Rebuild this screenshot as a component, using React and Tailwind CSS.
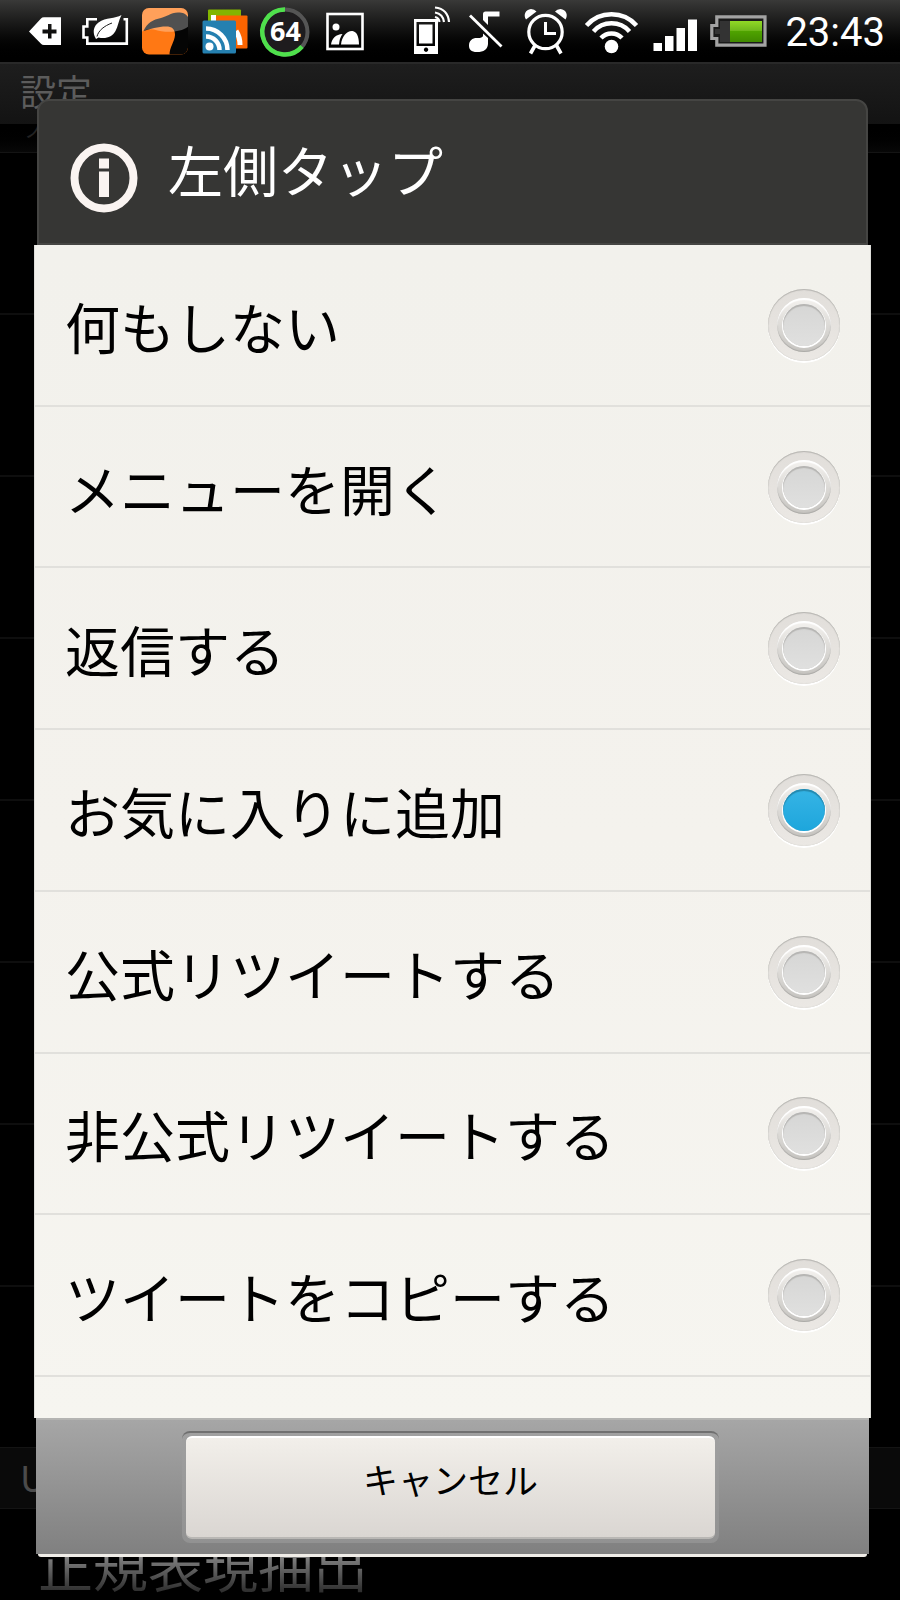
import { useState } from 'react';

const OPTIONS = [
  '何もしない',
  'メニューを開く',
  '返信する',
  'お気に入りに追加',
  '公式リツイートする',
  '非公式リツイートする',
  'ツイートをコピーする',
];

function LeftIcons() {
  return (
    <div className="flex items-center gap-3">
      <svg width="48" height="62" viewBox="22 0 48 62">
        <path fill="#fff" fillRule="evenodd" d="M29 31.5 41 18.5Q42 17.3 44 17.3H61V45H44Q42 45 41 43.8ZM48 24V29.5H42.5V33.5H48V38.5H51.5V33.5H56.5V29.5H51.5V24Z" />
      </svg>
      <svg width="48" height="62" viewBox="82 0 48 62">
        <path fill="none" stroke="#fff" strokeWidth="2.6" d="M97 19.3H87.3V26.5H83.5V37.5H87.3V43.6H126.8V19.3H123.5" />
        <path fill="#fff" d="M121.5 15C115 19 106 17 98.500 22.500C93.500 26.500 93 31 94.500 36L96 39L98.500 37.500C106 39.500 112.500 36.500 115.500 31C118 26.500 118.500 20.500 121.500 15Z" />
        <path fill="none" stroke="#1c1c1c" strokeWidth="1" d="M97 36.500C98.500 30.500 104 26 112 23" />
      </svg>
      <svg width="48" height="62" viewBox="142 0 48 62">
        <defs>
          <clipPath id="app-clip">
            <rect x="142" y="8" width="46" height="46.500" rx="7" />
          </clipPath>
        </defs>
        <g clipPath="url(#app-clip)">
          <rect x="142" y="8" width="46" height="47" fill="#ff7814" />
          <path fill="#050505" d="M143.500 31C147 23 153 19.500 161 18C167 16.500 170 13 178 12.500C184 12.500 187 14.500 189 19V55H169.500C169.500 47 174.500 42 175 35C175 29 172 26.500 166 26.500C158 26.500 150 29 143.500 31Z" />
          <path fill="#fff" fillOpacity="0.3" d="M142 8H189V26C181 33 165 33 154 29.500Q148 28.500 142 31.500Z" />
        </g>
      </svg>
      <svg width="48" height="62" viewBox="202 0 48 62">
        <rect x="208" y="9.500" width="33" height="32" rx="1" fill="#83b500" />
        <rect x="214.500" y="15.500" width="33" height="33" rx="1" fill="#fb6400" />
        <path stroke="#fff" strokeWidth="5" fill="none" d="M213.500 15V22M236 31Q240 37 240 45" />
        <rect x="202.500" y="20.500" width="33.500" height="33" rx="1.500" fill="#2580b0" />
        <circle cx="209.500" cy="46.500" r="4" fill="#fff" />
        <path fill="none" stroke="#fff" strokeWidth="4.500" d="M206 36.500A13.500 13.500 0 0 1 219.500 50M206 28.500A21.500 21.500 0 0 1 227.500 50" />
      </svg>
      <svg width="48" height="62" viewBox="262 0 48 62" className="overflow-visible">
        <circle cx="285" cy="32" r="22.500" fill="#1e1c1e" stroke="#555" strokeWidth="4" />
        <path fill="none" stroke="#4fe04c" strokeWidth="4.500" d="M285 9.500A22.500 22.500 0 1 0 302 46.500" />
        <text x="285.500" y="41" textAnchor="middle" fill="#fff" fontSize="27" fontWeight="700" fontFamily="'Open Sans', sans-serif">64</text>
      </svg>
      <svg width="48" height="62" viewBox="322 0 48 62">
        <rect x="327.500" y="14" width="35" height="35" fill="none" stroke="#fff" strokeWidth="2.600" />
        <circle cx="336" cy="27" r="3.500" fill="#fff" />
        <path fill="#fff" d="M331 44.500C332 38 336 34.500 342.500 34Q339.500 38 339 44.500ZM341 44.500C342 36 347 30.500 352.500 31C356.500 31.500 359 36 359 44.500Z" />
      </svg>
    </div>
  );
}

function RightIcons() {
  return (
    <>
      <svg width="48" height="62" viewBox="408 0 48 62">
        <path fill="#fff" fillRule="evenodd" d="M414 19H438V54H414ZM416.500 22V46H435V22ZM426 47.500A2.200 2.200 0 1 0 426.100 47.500Z" />
        <rect x="419" y="24.500" width="13.500" height="19" fill="#fff" />
        <path fill="none" stroke="#fff" strokeWidth="2.200" d="M435 17Q439 18 439.500 22M435 12.500Q443 14 444 22M435 7.500Q448 9 449 22" />
      </svg>
      <svg width="42" height="62" viewBox="468 0 42 62">
        <path fill="#fff" d="M483 14Q483 11.500 485.500 11.500H499.500V16.500H488V25L483 20ZM483 33.500 488 38V44C487.500 49.500 484 52 477 52C471 52 469 49.500 469 45.500C469 40 473 37.500 478 38Q482 38 483 36Z" />
        <path stroke="#fff" strokeWidth="2.800" d="M470 15.500 501.500 46.500" />
      </svg>
      <svg width="48" height="62" viewBox="522 0 48 62">
        <circle cx="545.500" cy="32" r="16.700" fill="none" stroke="#fff" strokeWidth="3.200" />
        <path fill="none" stroke="#fff" strokeWidth="3" d="M545.500 22V33.500H556" />
        <path fill="none" stroke="#fff" strokeWidth="3.600" d="M535 45.500 530.500 53.500M556.500 45.500 561 53.500" />
        <path fill="#fff" d="M526 19.500C523 15 525.500 9.500 531 9Q534.500 9 536.500 11.500ZM565.500 19.500C568.500 15 566 9.500 560.500 9Q557 9 555 11.500Z" />
      </svg>
      <svg width="58" height="62" viewBox="582 0 58 62">
        <circle cx="611.500" cy="46.500" r="6.800" fill="#fff" />
        <path fill="none" stroke="#fff" strokeWidth="4.500" d="M586.500 25.500A33.500 33.500 0 0 1 636.500 25.500M593.500 31.500A24 24 0 0 1 629.500 31.500M601 38A14.500 14.500 0 0 1 622 38" />
      </svg>
      <svg width="46" height="62" viewBox="652 0 46 62">
        <path fill="#fff" d="M653.500 43H662V51H653.500ZM665 36H673.500V51H665ZM676.500 28H685V51H676.500ZM688 19.500H697V51H688Z" />
      </svg>
      <svg width="63" height="62" viewBox="710 0 63 62">
        <defs>
          <linearGradient id="charge" x1="0" y1="0" x2="0" y2="1">
            <stop offset="0" stopColor="#91d926" />
            <stop offset="0.450" stopColor="#6fb81c" />
            <stop offset="0.500" stopColor="#4fa300" />
            <stop offset="1" stopColor="#408900" />
          </linearGradient>
        </defs>
        <path fill="#1a1a1a" stroke="#a3a3a3" strokeWidth="3.200" d="M716.800 16.800H765V45.200H716.800V38.500H711.800V25.500H716.800Z" />
        <path fill="#333" d="M720 21H730V42H720V34H715V29H720Z" />
        <rect x="730" y="21" width="32" height="21" fill="url(#charge)" />
      </svg>
    </>
  );
}

function StatusBar() {
  return (
    <header className="flex h-[62px] items-center justify-between bg-linear-to-b from-[#393938] to-black pr-[15px] pl-[22px]">
      <LeftIcons />
      <div className="flex items-center gap-3">
        <RightIcons />
        <time className="pt-1 font-['Roboto',sans-serif] text-[40px] leading-[58px] text-white">23:43</time>
      </div>
    </header>
  );
}

// Settings page that is dimmed behind the dialog
function SettingsPage() {
  return (
    <div aria-hidden="true" className="flex flex-1 flex-col text-[#4b4b4b]">
      <div className="h-[62px] border-t-2 border-[#292929] bg-linear-to-b from-[#1e1e1e] to-[#131313] px-5 text-4xl leading-[52px] text-[#5c5c5c]">
        設定
      </div>
      <div className="flex h-[29px] items-start overflow-hidden border-b border-[#141414] bg-linear-to-b from-black to-[#080808] px-6">
        <span className="-mt-1 text-xl leading-5 text-[#222]">ノ</span>
      </div>
      {OPTIONS.map((o) => (
        <div key={o} className="flex-1 border-b-2 border-[#0e0e0e]" />
      ))}
      <div className="flex-1" />
      <div className="h-[62px] border-y border-[#141414] bg-[#0a0a0a] px-5 text-4xl leading-[56px]">U</div>
      <div className="h-[91px] px-[38px] pt-6">
        <span className="block bg-linear-to-b from-[#808080] from-40% to-[#2c2c2c] bg-clip-text text-[55px] leading-[60px] text-transparent">
          正規表現抽出
        </span>
      </div>
    </div>
  );
}

function InfoIcon() {
  return (
    <svg width="68" height="70" viewBox="0 0 68 70" className="shrink-0">
      <ellipse cx="34" cy="35" rx="29.500" ry="30.500" fill="none" stroke="#faf4f1" strokeWidth="8" />
      <path fill="#faf4f1" d="M29 15.500H39V25.500H29ZM29 28.500H39V54H29Z" />
    </svg>
  );
}

function OptionRow({ label, checked, onChange }) {
  return (
    <label className="flex flex-1 items-center justify-between border-b-2 border-[#e1e0dc] px-[30px]">
      <span className="text-[55px] leading-[60px]">{label}</span>
      <input
        type="radio"
        name="left-tap"
        checked={checked}
        onChange={onChange}
        className="grid size-[72px] shrink-0 appearance-none place-items-center rounded-full bg-linear-to-b from-[#e1deda] to-[#ebe8e4] shadow-[0_2px_0_#fff,inset_0_1px_1px_#b5b4b0,inset_0_0_1px_#c4c3bf] before:size-[54px] before:rounded-full before:bg-linear-to-b before:from-[#f4f2ef] before:to-[#c6c4c0] before:shadow-[inset_0_2px_1px_#fff,inset_0_-1px_1px_#aaa9a6] before:[grid-area:1/1] after:size-[42px] after:rounded-full after:bg-linear-to-b after:from-[#d6d6d5] after:to-[#e0e0df] after:shadow-[0_1px_0_1px_#fff,inset_0_2px_1px_#b5b4b2] after:[grid-area:1/1] checked:after:from-[#35b4e5] checked:after:to-[#1da6dc] checked:after:shadow-[0_1px_0_1px_#fff,inset_0_2px_1px_#2588ad]"
      />
    </label>
  );
}

export default function App() {
  const [selected, setSelected] = useState('お気に入りに追加');

  return (
    <div className="relative flex min-h-screen flex-col overflow-hidden bg-black font-['Noto_Sans_CJK_JP',sans-serif]">
      <StatusBar />
      <SettingsPage />

      <div role="dialog" aria-labelledby="dialog-title" className="absolute top-[99px] right-[29px] bottom-[43px] left-[34px] flex flex-col">
        <div className="mx-[3px] flex h-[146px] items-center gap-[30px] rounded-t-xl border-2 border-[#454543] bg-[#363634] pt-3 pl-[31px]">
          <InfoIcon />
          <h1 id="dialog-title" className="-mt-5 text-[55px] leading-[60px] text-white">左側タップ</h1>
        </div>

        <form className="flex flex-1 flex-col border-x border-[#dededa] bg-linear-to-b from-[#f2f1ec] via-[#f4f2ed] to-[#f6f5f0] pb-[41px] text-black">
          {OPTIONS.map((o) => (
            <OptionRow key={o} label={o} checked={selected === o} onChange={() => setSelected(o)} />
          ))}
        </form>

        <div className="mx-0.5 flex h-[136px] items-center justify-center border-t-2 border-[#b4b4b2] bg-linear-to-b from-[#a6a6a6] to-[#808080] pr-1">
          <div className="w-[537px] rounded-lg border-t-2 border-[#707070] bg-linear-to-b from-[#a0a0a0] to-[#929292] px-1 pt-[3px] pb-1">
            <button
              type="button"
              className="h-[103px] w-full rounded-md border-t-2 border-b-2 border-t-white border-b-[#b9b7b4] bg-linear-to-b from-[#f2efea] to-[#dad6d2] pb-4 text-[35px] text-black"
            >
              キャンセル
            </button>
          </div>
        </div>
        <div className="mx-1 h-[3px] rounded-b-full bg-[#f0ede8]" />
      </div>
    </div>
  );
}
